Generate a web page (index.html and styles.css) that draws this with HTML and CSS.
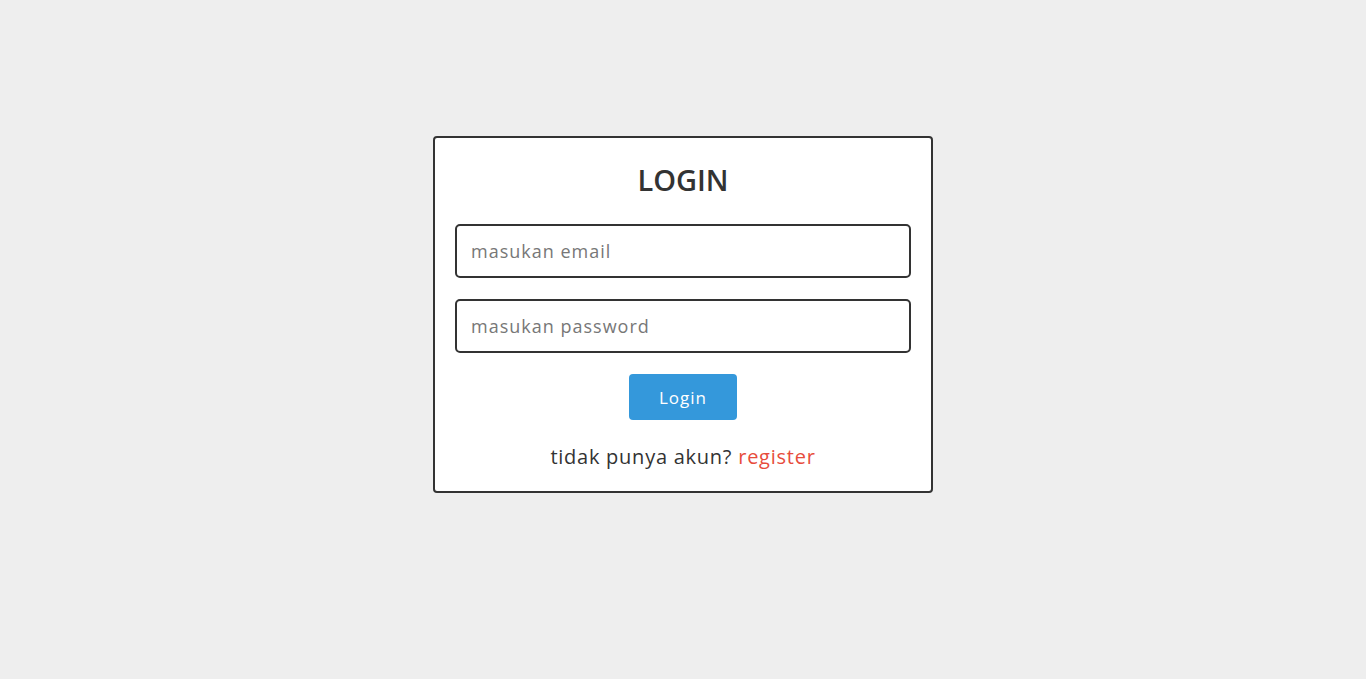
FILE: index.html
```html
<!DOCTYPE html>
<html lang="id">
<head>
<meta charset="utf-8">
<title>Login</title>
<link rel="stylesheet" href="styles.css">
</head>
<body>
<div class="card">
  <h2 class="title">LOGIN</h2>
  <form class="form">
    <input class="field" type="email" placeholder="masukan email">
    <input class="field" type="password" placeholder="masukan password">
    <button class="btn" type="button">Login</button>
  </form>
  <p class="foot">tidak punya akun? <a class="link" href="#">register</a></p>
</div>
</body>
</html>
```
FILE: styles.css
```css
* { box-sizing: border-box; }
html, body { margin: 0; padding: 0; }
body {
  background: #eeeeee;
  font-family: "Open Sans", sans-serif;
  color: #333333;
  padding-top: 136px;
}
.card {
  width: 500px;
  margin: 0 auto;
  background: #ffffff;
  border: 2px solid #333333;
  border-radius: 4px;
  padding: 20px 20px 19px;
}
.title {
  margin: 0 0 22px;
  text-align: center;
  font-size: 29px;
  font-weight: 600;
  line-height: 44px;
  color: #333333;
}
.form {
  display: flex;
  flex-direction: column;
  align-items: center;
  gap: 21px;
}
.field {
  width: 100%;
  height: 54px;
  border: 2px solid #333333;
  border-radius: 5px;
  padding: 0 14px;
  font-family: inherit;
  font-size: 18px;
  letter-spacing: 1px;
  color: #333;
  outline: none;
}
.field::placeholder { color: #777777; }
.btn {
  width: 108px;
  height: 46px;
  border: none;
  border-radius: 4px;
  background: #3498db;
  color: #ffffff;
  font-family: inherit;
  font-size: 17px;
  letter-spacing: 1px;
}
.foot {
  margin: 22px 0 0;
  text-align: center;
  font-size: 20px;
  line-height: 30px;
  letter-spacing: 0.75px;
  color: #333333;
}
.link { color: #e74c3c; text-decoration: none; }
```
